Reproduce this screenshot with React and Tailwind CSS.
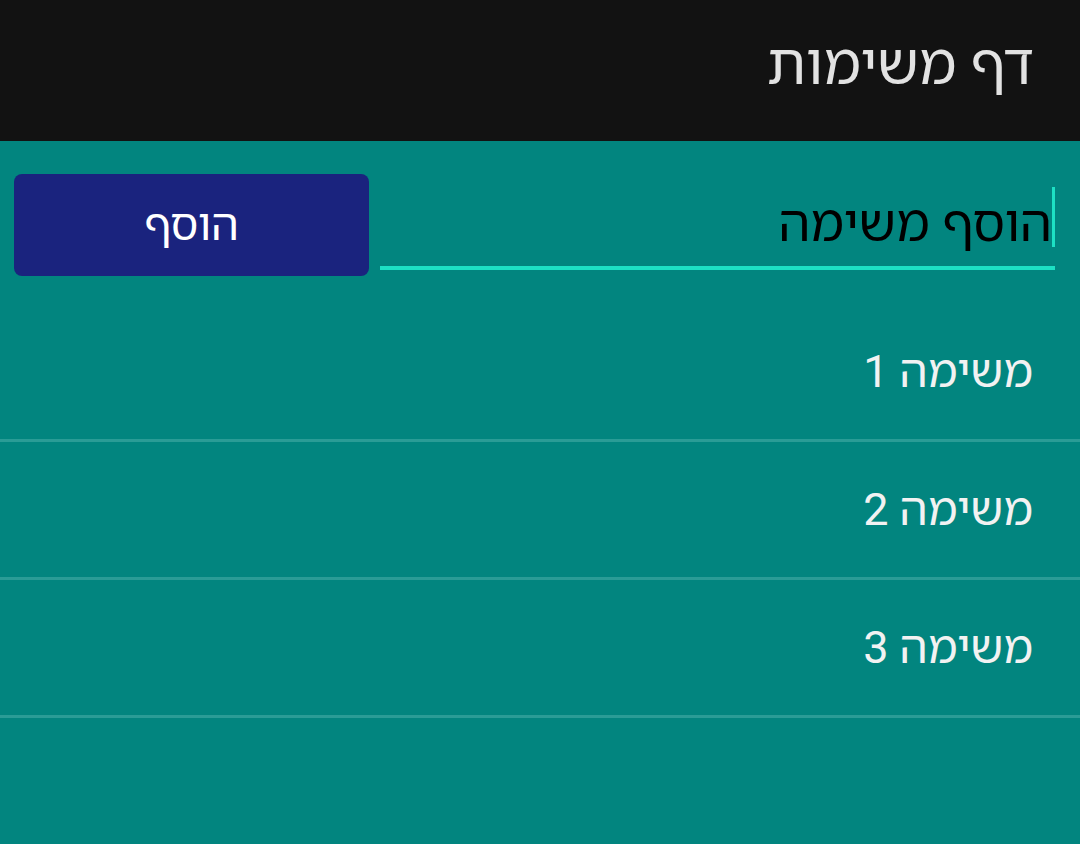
export default function App() {
    const tasks = ["משימה 1", "משימה 2", "משימה 3"];

    return (
        <div
            dir="rtl"
            className="w-[1080px] h-[844px] bg-[#02857f] flex flex-col overflow-hidden"
            style={{ fontFamily: "Roboto, 'Noto Sans Hebrew', 'Noto Sans', 'DejaVu Sans', sans-serif" }}
        >
            {/* ===== Toolbar ===== */}
            <header className="h-[141px] bg-[#121212] flex items-center pr-[46px] shrink-0">
                <h1 className="text-[57px] text-[#e2e2e2] leading-none pb-3">דף משימות</h1>
            </header>

            {/* ===== Add row ===== */}
            <div className="flex items-start pt-[33px] pl-[14px] pr-[25px] gap-[11px]">
                <div className="flex-1 h-[98px] flex flex-col justify-end">
                    <div className="flex items-center h-[62px] mb-[18px]">
                        <span className="w-[3px] h-[60px] bg-[#1de0c4] shrink-0" />
                        <span className="text-[51px] text-black leading-none translate-y-[6px]">הוסף משימה</span>
                    </div>
                    <div className="h-[4px] bg-[#1de0c4] mb-[2px]" />
                </div>
                <button className="w-[355px] h-[102px] bg-[#1a237e] rounded-[8px] text-white text-[44px] leading-none">
                    הוסף
                </button>
            </div>

            {/* ===== List ===== */}
            <ul className="mt-[28px]">
                {tasks.map((t) => (
                    <li
                        key={t}
                        className="h-[138px] flex items-center pr-[47px] border-b-[3px] border-[#2a9c96]"
                    >
                        <span className="text-[45px] text-[#f2f2f2] leading-none">{t}</span>
                    </li>
                ))}
            </ul>
        </div>
    );
}
